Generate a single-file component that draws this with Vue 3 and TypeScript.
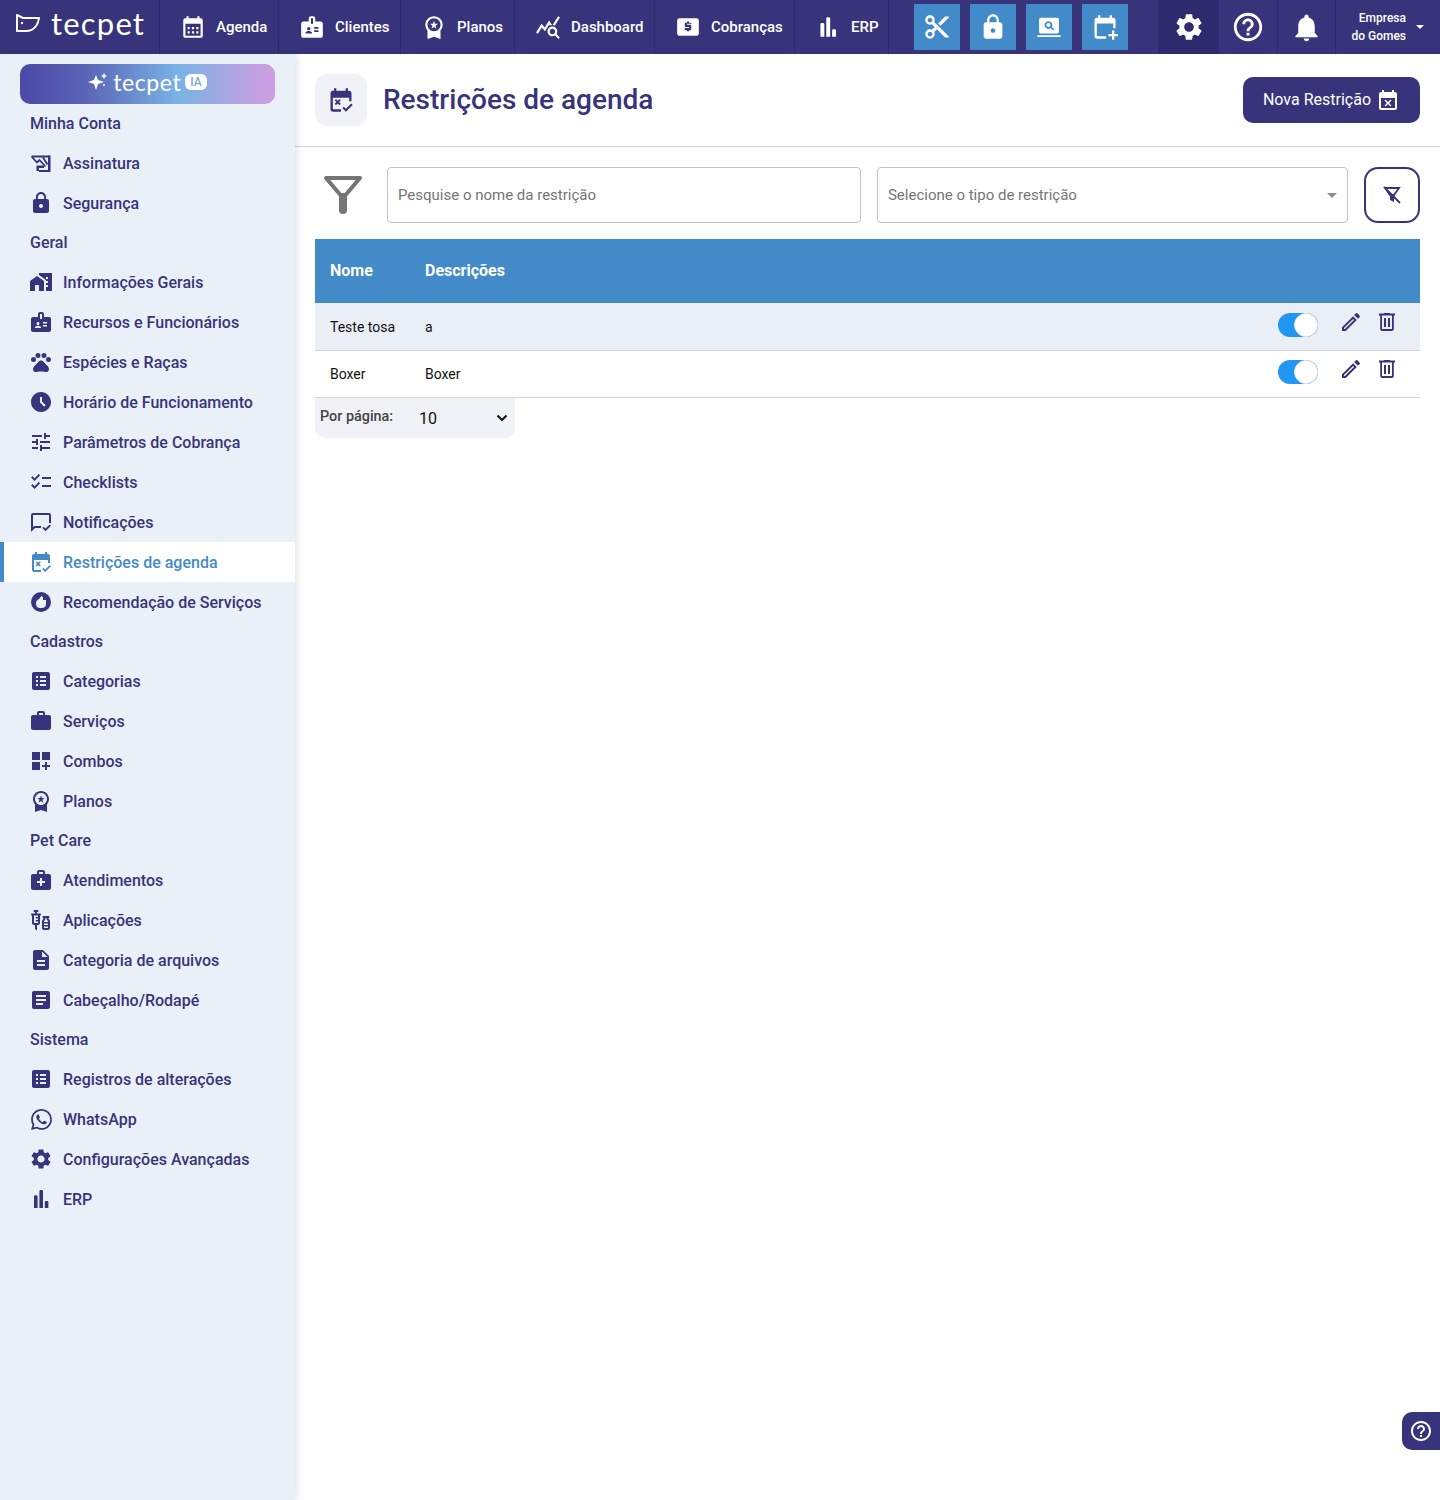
<template>
  <div class="page">
    <header class="topbar">
      <div class="logo">
        <svg class="logo-mark" viewBox="0 0 26 20">
          <path d="M2 2 L8 5 H24 C23 12 19 18 11 18 H2 Z" fill="none" stroke="currentColor" stroke-width="2" stroke-linejoin="round" />
          <circle cx="7" cy="10" r="1.2" fill="currentColor" />
        </svg>
        <span class="logo-text">tecpet</span>
      </div>
      <a v-for="item in topLinks" :key="item.label" class="top-link" :style="{ width: item.width + 'px' }">
        <span class="icon-box"><Icon :name="item.icon" :size="26" /></span>
        <span>{{ item.label }}</span>
      </a>
      <div class="quick">
        <button v-for="icon in quickActions" :key="icon" class="quick-btn">
          <Icon :name="icon" :size="28" />
        </button>
      </div>
      <div class="top-cell gear-cell"><Icon name="gear" :size="32" /></div>
      <div class="top-cell help-cell"><Icon name="help" :size="34" /></div>
      <div class="top-cell bell-cell"><Icon name="bell" :size="33" /></div>
      <div class="company">
        <span>Empresa<br />do Gomes</span>
        <i class="caret"></i>
      </div>
    </header>

    <div class="body">
      <aside class="sidebar">
        <button class="ia-btn">
          <svg class="spark" viewBox="0 0 22 20">
            <path d="M8 3 L10 8 L16 10 L10 12 L8 18 L6 12 L0 10 L6 8 Z" fill="currentColor" />
            <path d="M16 1 L17 3 L19 4 L17 5 L16 7 L15 5 L13 4 L15 3 Z" fill="currentColor" />
            <circle cx="16" cy="13" r="1" fill="currentColor" />
          </svg>
          <span class="ia-text">tecpet</span>
          <span class="ia-tag">IA</span>
        </button>
        <template v-for="group in menu" :key="group.title">
          <div class="group-title">{{ group.title }}</div>
          <a
            v-for="item in group.items"
            :key="item.label"
            class="side-item"
            :class="{ current: item.label === 'Restrições de agenda' }"
          >
            <span class="icon-box"><Icon :name="item.icon" :size="item.icon === 'whatsapp' ? 21 : 24" /></span>
            <span>{{ item.label }}</span>
          </a>
        </template>
      </aside>

      <main class="content">
        <div class="page-head">
          <div class="head-icon"><Icon name="restrict" :size="28" /></div>
          <h1>Restrições de agenda</h1>
          <button class="new-btn">
            Nova Restrição
            <Icon name="busy" :size="24" />
          </button>
        </div>

        <div class="filters">
          <svg class="funnel" viewBox="0 0 40 40">
            <path d="M3 3H37L20 23Z" fill="none" stroke="#757575" stroke-width="4" stroke-linejoin="round" />
            <path d="M20 22V35" stroke="#757575" stroke-width="8" stroke-linecap="round" />
          </svg>
          <input class="field search" type="text" placeholder="Pesquise o nome da restrição" />
          <div class="field select">
            <span>Selecione o tipo de restrição</span>
            <i class="select-caret"></i>
          </div>
          <button class="clear-btn"><Icon name="filterOff" :size="24" /></button>
        </div>

        <table class="grid">
          <thead>
            <tr>
              <th class="col-name">Nome</th>
              <th>Descrições</th>
              <th></th>
            </tr>
          </thead>
          <tbody>
            <tr v-for="row in rows" :key="row.name">
              <td class="col-name">{{ row.name }}</td>
              <td>{{ row.description }}</td>
              <td>
                <div class="actions">
                  <span class="toggle"><span class="knob"></span></span>
                  <Icon name="pencil" :size="24" />
                  <Icon name="trash" :size="24" />
                </div>
              </td>
            </tr>
          </tbody>
        </table>

        <div class="pager">
          <span class="pager-label">Por página:</span>
          <span class="pager-value">10</span>
          <svg class="chevron" viewBox="0 0 12 8">
            <path d="M1.5 1.5 6 6l4.5-4.5" fill="none" stroke="#111" stroke-width="2" />
          </svg>
        </div>
      </main>
    </div>

    <button class="help-fab"><Icon name="help" :size="24" /></button>
  </div>
</template>

<script setup lang="ts">
import { h } from 'vue'

interface Glyph {
  d?: string
  s?: string
}

const glyphs: Record<string, Glyph> = {
  calendar: { d: 'M19 4h-1V2h-2v2H8V2H6v2H5a2 2 0 00-2 2v14a2 2 0 002 2h14a2 2 0 002-2V6a2 2 0 00-2-2zM5 9h14v11H5zM7 12h2v2H7zM11 12h2v2h-2zM15 12h2v2h-2zM7 16h2v2H7zM11 16h2v2h-2zM15 16h2v2h-2z' },
  badge: { d: 'M20 7h-5V4c0-1.1-.9-2-2-2h-2c-1.1 0-2 .9-2 2v3H4c-1.1 0-2 .9-2 2v11c0 1.1.9 2 2 2h16c1.1 0 2-.9 2-2V9c0-1.1-.9-2-2-2zM9 12c.83 0 1.5.67 1.5 1.5S9.83 15 9 15s-1.5-.67-1.5-1.5S8.17 12 9 12zm3 6H6v-.75c0-1 2-1.5 3-1.5s3 .5 3 1.5V18zm1-9h-2V4h2v5zm5 7.5h-4V15h4v1.5zm0-3h-4V12h4v1.5z' },
  medal: { d: 'M9.68 13.69 12 11.93l2.31 1.76-.88-2.85L15.75 9h-2.84L12 6.19 11.09 9H8.25l2.31 1.84-.88 2.85zM20 10c0-4.42-3.58-8-8-8s-8 3.58-8 8c0 2.03.76 3.87 2 5.28V23l6-2 6 2v-7.72c1.24-1.41 2-3.25 2-5.28zm-8-6c3.31 0 6 2.69 6 6s-2.69 6-6 6-6-2.69-6-6 2.69-6 6-6z' },
  stats: { d: 'M19.88 18.47c.44-.7.7-1.51.7-2.39 0-2.49-2.01-4.5-4.5-4.5s-4.5 2.01-4.5 4.5 2.01 4.5 4.49 4.5c.88 0 1.7-.26 2.39-.7L21.58 23 23 21.58l-3.12-3.11zm-3.8.11c-1.38 0-2.5-1.12-2.5-2.5s1.12-2.5 2.5-2.5 2.5 1.12 2.5 2.5-1.12 2.5-2.5 2.5zm-.36-8.5c-.74.02-1.45.18-2.1.45l-.55-.83-3.8 6.18-3.01-3.52-3.63 5.81L1 17l5-8 3 3.5L13 6l2.72 4.08zm2.59.5c-.64-.28-1.33-.45-2.05-.49L21.38 2 23 3.18l-4.69 7.4z' },
  money: { d: 'M20 4H4c-1.11 0-1.99.89-1.99 2L2 18c0 1.11.89 2 2 2h16c1.11 0 2-.89 2-2V6c0-1.11-.89-2-2-2zm-5 5h-4v1h3c.55 0 1 .45 1 1v3c0 .55-.45 1-1 1h-1v1h-2v-1H9v-2h4v-1h-3c-.55 0-1-.45-1-1V9c0-.55.45-1 1-1h1V7h2v1h2v1z' },
  bars: { d: 'M5 9.5a1.2 1.2 0 011.2-1.2h1.2a1.2 1.2 0 011.2 1.2V21H5zM10.4 4.2A1.2 1.2 0 0111.6 3h1.2A1.2 1.2 0 0114 4.2V21h-3.6zM15.8 15.2a1.2 1.2 0 011.2-1.2h1.2a1.2 1.2 0 011.2 1.2V21h-3.6z' },
  scissors: { d: 'M9.64 7.64c.23-.5.36-1.05.36-1.64 0-2.21-1.79-4-4-4S2 3.79 2 6s1.79 4 4 4c.59 0 1.14-.13 1.64-.36L10 12l-2.36 2.36C7.14 14.13 6.59 14 6 14c-2.21 0-4 1.79-4 4s1.79 4 4 4 4-1.79 4-4c0-.59-.13-1.14-.36-1.64L12 14l7 7h3v-1L9.64 7.64zM6 8c-1.1 0-2-.89-2-2s.9-2 2-2 2 .89 2 2-.9 2-2 2zm0 12c-1.1 0-2-.89-2-2s.9-2 2-2 2 .89 2 2-.9 2-2 2zm6-7.5c-.28 0-.5-.22-.5-.5s.22-.5.5-.5.5.22.5.5-.22.5-.5.5zM19 3l-6 6 2 2 7-7V3z' },
  lock: { d: 'M18 8h-1V6c0-2.76-2.24-5-5-5S7 3.24 7 6v2H6c-1.1 0-2 .9-2 2v10c0 1.1.9 2 2 2h12c1.1 0 2-.9 2-2V10c0-1.1-.9-2-2-2zm-6 9c-1.1 0-2-.9-2-2s.9-2 2-2 2 .9 2 2-.9 2-2 2zm3.1-9H8.9V6c0-1.71 1.39-3.1 3.1-3.1 1.71 0 3.1 1.39 3.1 3.1v2z' },
  laptop: { d: 'M5 4h14a1.5 1.5 0 011.5 1.5V16a1.5 1.5 0 01-1.5 1.5H5A1.5 1.5 0 013.5 16V5.5A1.5 1.5 0 015 4zM2 19h20v1.6H2zM11.5 7a3.3 3.3 0 102 5.9l2 2 1-1-2-2A3.3 3.3 0 0011.5 7zM11.5 8.5a1.8 1.8 0 110 3.6 1.8 1.8 0 010-3.6z' },
  calendarAdd: { d: 'M19 4h-1V2h-2v2H8V2H6v2H5a2 2 0 00-2 2v14a2 2 0 002 2h8v-2H5V9h14v4h2V6a2 2 0 00-2-2zM18 15h2v3h3v2h-3v3h-2v-3h-3v-2h3z' },
  gear: { d: 'M19.14 12.94c.04-.3.06-.61.06-.94 0-.32-.02-.64-.07-.94l2.03-1.58c.18-.14.23-.41.12-.61l-1.92-3.32c-.12-.22-.37-.29-.59-.22l-2.39.96c-.5-.38-1.03-.7-1.62-.94l-.36-2.54c-.04-.24-.24-.41-.48-.41h-3.84c-.24 0-.43.17-.47.41l-.36 2.54c-.59.24-1.13.57-1.62.94l-2.39-.96c-.22-.08-.47 0-.59.22L2.74 8.87c-.12.21-.08.47.12.61l2.03 1.58c-.05.3-.09.63-.09.94s.02.64.07.94l-2.03 1.58c-.18.14-.23.41-.12.61l1.92 3.32c.12.22.37.29.59.22l2.39-.96c.5.38 1.03.7 1.62.94l.36 2.54c.05.24.24.41.48.41h3.84c.24 0 .44-.17.47-.41l.36-2.54c.59-.24 1.13-.56 1.62-.94l2.39.96c.22.08.47 0 .59-.22l1.92-3.32c.12-.22.07-.47-.12-.61l-2.01-1.58zM12 15.6c-1.98 0-3.6-1.62-3.6-3.6s1.62-3.6 3.6-3.6 3.6 1.62 3.6 3.6-1.62 3.6-3.6 3.6z' },
  help: { d: 'M11 18h2v-2h-2v2zm1-16C6.48 2 2 6.48 2 12s4.48 10 10 10 10-4.48 10-10S17.52 2 12 2zm0 18c-4.41 0-8-3.59-8-8s3.59-8 8-8 8 3.59 8 8-3.59 8-8 8zm0-14c-2.21 0-4 1.79-4 4h2c0-1.1.9-2 2-2s2 .9 2 2c0 2-3 1.75-3 5h2c0-2.25 3-2.5 3-5 0-2.21-1.79-4-4-4z' },
  bell: { d: 'M12 22c1.1 0 2-.9 2-2h-4c0 1.1.89 2 2 2zm6-6v-5c0-3.07-1.64-5.64-4.5-6.32V4c0-.83-.67-1.5-1.5-1.5s-1.5.67-1.5 1.5v.68C7.63 5.36 6 7.92 6 11v5l-2 2v1h16v-1l-2-2z' },
  restrict: { d: 'M19 4h-1V2h-2v2H8V2H6v2H5C3.9 4 3 4.9 3 6v14c0 1.1.9 2 2 2h7v-2H5V10h14v3h2V6c0-1.1-.9-2-2-2zM6.6 12.3l1.1-1.1 1.5 1.5 1.5-1.5 1.1 1.1-1.5 1.5 1.5 1.5-1.1 1.1-1.5-1.5-1.5 1.5-1.1-1.1 1.5-1.5zM16.2 22l-3-3 1.2-1.2 1.8 1.8 4.6-4.6 1.2 1.2z' },
  busy: { d: 'M19 4h-1V2h-2v2H8V2H6v2H5C3.9 4 3 4.9 3 6v14c0 1.1.9 2 2 2h14c1.1 0 2-.9 2-2V6c0-1.1-.9-2-2-2zm0 16H5V10h14v10zM9.5 18.5 12 16l2.5 2.5 1-1L13 15l2.5-2.5-1-1L12 14 9.5 11.5l-1 1L11 15l-2.5 2.5z' },
  sign: { d: 'M7.5 14.5H15V17H10v3H7.5ZM19 4.5h2.5V21H10v-2h9z', s: 'M2.5 5.5H20.5M2.5 5.5 8 11.5l2.5-2.5 6 6.5M14 6.5l4.5 7' },
  home: { d: 'M1 11v10h5v-6h4v6h5V11L8 6zM10 3v1.97l7 5V11h2v2h-2v2h2v2h-2v4h6V3H10zm9 6h-2V7h2v2z' },
  pets: { d: 'M4.5 9.5m-2.5 0a2.5 2.5 0 1 0 5 0a2.5 2.5 0 1 0 -5 0M9 5.5m-2.5 0a2.5 2.5 0 1 0 5 0a2.5 2.5 0 1 0 -5 0M15 5.5m-2.5 0a2.5 2.5 0 1 0 5 0a2.5 2.5 0 1 0 -5 0M19.5 9.5m-2.5 0a2.5 2.5 0 1 0 5 0a2.5 2.5 0 1 0 -5 0M17.34 14.86c-.87-1.02-1.6-1.89-2.48-2.91-.46-.54-1.05-1.08-1.75-1.32-.11-.04-.22-.07-.33-.09-.25-.04-.52-.04-.78-.04s-.53 0-.79.05c-.11.02-.22.05-.33.09-.7.24-1.28.78-1.75 1.32-.87 1.02-1.6 1.89-2.48 2.91-1.31 1.31-2.92 2.76-2.62 4.79.29 1.02 1.02 2.03 2.33 2.32.73.15 3.06-.44 5.54-.44h.18c2.48 0 4.81.58 5.54.44 1.31-.29 2.04-1.31 2.33-2.32.31-2.04-1.3-3.49-2.61-4.8z' },
  clock: { d: 'M11.99 2C6.47 2 2 6.48 2 12s4.47 10 9.99 10C17.52 22 22 17.52 22 12S17.52 2 11.99 2zm3.3 14.71L11 12.41V7h2v4.59l3.71 3.71-1.42 1.41z' },
  tune: { d: 'M3 17v2h6v-2H3zM3 5v2h10V5H3zm10 16v-2h8v-2h-8v-2h-2v6h2zM7 9v2H3v2h4v2h2V9H7zm14 4v-2H11v2h10zm-6-4h2V7h4V5h-4V3h-2v6z' },
  checklist: { d: 'M22 7h-9v2h9V7zm0 8h-9v2h9v-2zM5.54 11 2 7.46l1.41-1.41 2.12 2.12 4.24-4.24 1.41 1.41L5.54 11zm0 8L2 15.46l1.41-1.41 2.12 2.12 4.24-4.24 1.41 1.41L5.54 19z' },
  chat: { d: 'M4 3h16a2 2 0 012 2v8h-2V5H4v12.2L5.2 16H12v2H6l-4 4V5a2 2 0 012-2zM16.5 21.2l-3.2-3.2 1.3-1.3 1.9 1.9 4.2-4.2 1.3 1.3z' },
  thumb: { d: 'M12 2a10 10 0 100 20 10 10 0 000-20zM12.5 6 14 7.2V10h3v4c0 2.4-1.7 4-4 4h-2c-2.4 0-4-1.7-4-4.6C7 10.5 9 10 10 9z' },
  list: { d: 'M19 3H5c-1.1 0-2 .9-2 2v14c0 1.1.9 2 2 2h14c1.1 0 2-.9 2-2V5c0-1.1-.9-2-2-2zM9 17H7v-2h2v2zm0-4H7v-2h2v2zm0-4H7V7h2v2zm8 8h-6v-2h6v2zm0-4h-6v-2h6v2zm0-4h-6V7h6v2z' },
  work: { d: 'M20 6h-4V4c0-1.11-.89-2-2-2h-4c-1.11 0-2 .89-2 2v2H4c-1.11 0-1.99.89-1.99 2L2 19c0 1.11.89 2 2 2h16c1.11 0 2-.89 2-2V8c0-1.11-.89-2-2-2zm-6 0h-4V4h4v2z' },
  combos: { d: 'M3 3h8v8H3zm10 0h8v8h-8zM3 13h8v8H3zm15 0h-2v3h-3v2h3v3h2v-3h3v-2h-3z' },
  medical: { d: 'M20 6h-4V4c0-1.1-.9-2-2-2h-4c-1.1 0-2 .9-2 2v2H4c-1.1 0-2 .9-2 2v12c0 1.1.9 2 2 2h16c1.1 0 2-.9 2-2V8c0-1.1-.9-2-2-2zM10 4h4v2h-4V4zm6 11h-3v3h-2v-3H8v-2h3v-3h2v3h3v2z' },
  vaccine: { d: 'M11 5.5H8V4h.5c.55 0 1-.45 1-1s-.45-1-1-1h-3c-.55 0-1 .45-1 1s.45 1 1 1H6v1.5H3c-.55 0-1 .45-1 1s.45 1 1 1V15c0 1.1.9 2 2 2h1v4l2 1.5V17h1c1.1 0 2-.9 2-2V7.5c.55 0 1-.45 1-1S11.55 5.5 11 5.5zM9 9H7.25c-.41 0-.75.34-.75.75s.34.75.75.75H9V12H7.25c-.41 0-.75.34-.75.75s.34.75.75.75H9V15H5V7.5h4V9zM19.5 10.5V10c.55 0 1-.45 1-1s-.45-1-1-1h-5c-.55 0-1 .45-1 1s.45 1 1 1v.5c0 .5-1.5 1.16-1.5 3V20c0 1.1.9 2 2 2h4c1.1 0 2-.9 2-2v-6.5C21 11.66 19.5 11 19.5 10.5zM16.5 10.5V10h1v.5c0 1.6 1.5 2 1.5 3V14h-4v-.5C15 12.5 16.5 12.1 16.5 10.5zM19 15.5V17h-4v-1.5H19zM15 20v-1.5h4V20H15z' },
  file: { d: 'M14 2H6c-1.1 0-1.99.9-1.99 2L4 20c0 1.1.89 2 1.99 2H18c1.1 0 2-.9 2-2V8l-6-6zm2 16H8v-2h8v2zm0-4H8v-2h8v2zm-3-5V3.5L18.5 9H13z' },
  article: { d: 'M19 3H5c-1.1 0-2 .9-2 2v14c0 1.1.9 2 2 2h14c1.1 0 2-.9 2-2V5c0-1.1-.9-2-2-2zm-5 14H7v-2h7v2zm3-4H7v-2h10v2zm0-4H7V7h10v2z' },
  whatsapp: { d: 'M17.472 14.382c-.297-.149-1.758-.867-2.03-.967-.273-.099-.471-.148-.67.15-.197.297-.767.966-.94 1.164-.173.199-.347.223-.644.075-.297-.15-1.255-.463-2.39-1.475-.883-.788-1.48-1.761-1.653-2.059-.173-.297-.018-.458.13-.606.134-.133.298-.347.446-.52.149-.174.198-.298.298-.497.099-.198.05-.371-.025-.52-.075-.149-.669-1.612-.916-2.207-.242-.579-.487-.5-.669-.51-.173-.008-.371-.01-.57-.01-.198 0-.52.074-.792.372-.272.297-1.04 1.016-1.04 2.479 0 1.462 1.065 2.875 1.213 3.074.149.198 2.096 3.2 5.077 4.487.709.306 1.262.489 1.694.625.712.227 1.36.195 1.871.118.571-.085 1.758-.719 2.006-1.413.248-.694.248-1.289.173-1.413-.074-.124-.272-.198-.57-.347m-5.421 7.403h-.004a9.87 9.87 0 01-5.031-1.378l-.361-.214-3.741.982.998-3.648-.235-.374a9.86 9.86 0 01-1.51-5.26c.001-5.45 4.436-9.884 9.888-9.884 2.64 0 5.122 1.03 6.988 2.898a9.825 9.825 0 012.893 6.994c-.003 5.45-4.437 9.884-9.885 9.884m8.413-18.297A11.815 11.815 0 0012.05 0C5.495 0 .16 5.335.157 11.892c0 2.096.547 4.142 1.588 5.945L.057 24l6.305-1.654a11.882 11.882 0 005.683 1.448h.005c6.554 0 11.89-5.335 11.893-11.893a11.821 11.821 0 00-3.48-8.413z' },
  pencil: { d: 'M3 17.25V21h3.75L17.81 9.94l-3.75-3.75L3 17.25zM5.92 19H5v-.92l9.06-9.06.92.92L5.92 19zM20.71 5.63l-2.34-2.34a1 1 0 00-1.41 0l-1.83 1.83 3.75 3.75 1.83-1.83a1 1 0 000-1.41z' },
  trash: { d: 'M15 3.5V3H9v.5H4v2h1.2V19c0 1.1.9 2 2 2h9.6c1.1 0 2-.9 2-2V5.5H20v-2h-5zM17 19H7V5.5h10V19zM9 8h2v9H9zm4 0h2v9h-2z' },
  filterOff: { d: 'M10 12h4v7l-4-2z', s: 'M5 5h14l-5 7h-4zM4 4l16 16' },
}

const Icon = (props: { name: string; size?: number }) => {
  const glyph = glyphs[props.name]
  const children = []
  if (glyph.d) children.push(h('path', { d: glyph.d, fill: 'currentColor', 'fill-rule': 'evenodd' }))
  if (glyph.s) children.push(h('path', { d: glyph.s, fill: 'none', stroke: 'currentColor', 'stroke-width': 1.8 }))
  const size = props.size ?? 22
  return h('svg', { viewBox: '0 0 24 24', width: size, height: size, style: 'flex:none;display:block' }, children)
}
Icon.props = ['name', 'size']

const topLinks = [
  { label: 'Agenda', icon: 'calendar', width: 119 },
  { label: 'Clientes', icon: 'badge', width: 122 },
  { label: 'Planos', icon: 'medal', width: 114 },
  { label: 'Dashboard', icon: 'stats', width: 140 },
  { label: 'Cobranças', icon: 'money', width: 140 },
  { label: 'ERP', icon: 'bars', width: 94 },
]

const quickActions = ['scissors', 'lock', 'laptop', 'calendarAdd']

const menu = [
  {
    title: 'Minha Conta',
    items: [
      { label: 'Assinatura', icon: 'sign' },
      { label: 'Segurança', icon: 'lock' },
    ],
  },
  {
    title: 'Geral',
    items: [
      { label: 'Informações Gerais', icon: 'home' },
      { label: 'Recursos e Funcionários', icon: 'badge' },
      { label: 'Espécies e Raças', icon: 'pets' },
      { label: 'Horário de Funcionamento', icon: 'clock' },
      { label: 'Parâmetros de Cobrança', icon: 'tune' },
      { label: 'Checklists', icon: 'checklist' },
      { label: 'Notificações', icon: 'chat' },
      { label: 'Restrições de agenda', icon: 'restrict' },
      { label: 'Recomendação de Serviços', icon: 'thumb' },
    ],
  },
  {
    title: 'Cadastros',
    items: [
      { label: 'Categorias', icon: 'list' },
      { label: 'Serviços', icon: 'work' },
      { label: 'Combos', icon: 'combos' },
      { label: 'Planos', icon: 'medal' },
    ],
  },
  {
    title: 'Pet Care',
    items: [
      { label: 'Atendimentos', icon: 'medical' },
      { label: 'Aplicações', icon: 'vaccine' },
      { label: 'Categoria de arquivos', icon: 'file' },
      { label: 'Cabeçalho/Rodapé', icon: 'article' },
    ],
  },
  {
    title: 'Sistema',
    items: [
      { label: 'Registros de alterações', icon: 'list' },
      { label: 'WhatsApp', icon: 'whatsapp' },
      { label: 'Configurações Avançadas', icon: 'gear' },
      { label: 'ERP', icon: 'bars' },
    ],
  },
]

const rows = [
  { name: 'Teste tosa', description: 'a' },
  { name: 'Boxer', description: 'Boxer' },
]
</script>

<style>
body {
  margin: 0;
  background: #fff;
}
</style>

<style scoped>
.page {
  height: 1500px;
  display: flex;
  flex-direction: column;
  overflow: hidden;
  font-family: Roboto, "Liberation Sans", sans-serif;
  color: #38347b;
}
button {
  font-family: inherit;
  border: none;
  cursor: pointer;
}
.icon-box {
  width: 22px;
  height: 22px;
  flex: none;
  display: flex;
  align-items: center;
  justify-content: center;
}

.topbar {
  height: 54px;
  flex: none;
  display: flex;
  align-items: stretch;
  background: #38347b;
  color: #fff;
}
.logo {
  width: 160px;
  flex: none;
  box-sizing: border-box;
  padding: 0 0 8px 15px;
  display: flex;
  align-items: center;
  gap: 10px;
  border-right: 1px solid #2e2a6e;
}
.logo-mark {
  width: 26px;
  height: 20px;
}
.logo-text {
  font-family: Lato, sans-serif;
  font-size: 31px;
  letter-spacing: 1.2px;
}
.top-link {
  flex: none;
  box-sizing: border-box;
  display: flex;
  align-items: center;
  gap: 12px;
  padding-left: 22px;
  font-size: 15px;
  font-weight: 500;
  border-right: 1px solid #2e2a6e;
}
.quick {
  width: 269px;
  flex: none;
  box-sizing: border-box;
  display: flex;
  align-items: center;
  gap: 10px;
  padding-left: 25px;
}
.quick-btn {
  width: 46px;
  height: 46px;
  padding: 0;
  display: flex;
  align-items: center;
  justify-content: center;
  background: #438bc8;
  color: #fff;
}
.top-cell {
  flex: none;
  display: flex;
  align-items: center;
  justify-content: center;
  border-left: 1px solid #2e2a6e;
}
.gear-cell {
  width: 59px;
  background: #2e2a6e;
}
.help-cell {
  width: 58px;
}
.bell-cell {
  width: 57px;
}
.company {
  flex: 1;
  display: flex;
  align-items: center;
  justify-content: flex-end;
  gap: 10px;
  padding-right: 16px;
  border-left: 1px solid #2e2a6e;
  font-size: 12px;
  font-weight: 500;
  line-height: 18px;
  text-align: right;
}
.caret {
  width: 0;
  height: 0;
  border-left: 4px solid transparent;
  border-right: 4px solid transparent;
  border-top: 4px solid #fff;
}

.body {
  flex: 1;
  display: flex;
  min-height: 0;
}
.sidebar {
  width: 295px;
  flex: none;
  box-sizing: border-box;
  padding-top: 10px;
  background: #eaf0f8;
  box-shadow: 2px 0 8px rgba(0, 0, 0, 0.12);
  position: relative;
}
.ia-btn {
  display: flex;
  align-items: center;
  justify-content: center;
  width: 255px;
  height: 40px;
  margin-left: 20px;
  padding: 0 0 4px 0;
  border-radius: 10px;
  color: #fff;
  background: linear-gradient(90deg, #4c49a8 0%, #5a63b5 25%, #79b3e6 62%, #a5a8e2 80%, #cf9ce0 100%);
}
.spark {
  width: 22px;
  height: 20px;
  margin-right: 3px;
}
.ia-text {
  font-family: Lato, sans-serif;
  font-size: 23px;
  letter-spacing: 0.6px;
}
.ia-tag {
  margin-left: 4px;
  padding: 0 5px;
  height: 16px;
  border-radius: 6px;
  background: #fff;
  color: #7da6de;
  font-size: 12px;
  font-weight: 500;
  line-height: 16px;
}
.group-title {
  height: 39px;
  padding-left: 30px;
  font-size: 16px;
  font-weight: 500;
  line-height: 39px;
}
.side-item {
  height: 40px;
  display: flex;
  align-items: center;
  gap: 11px;
  padding-left: 30px;
  font-size: 16px;
  font-weight: 500;
}
.side-item.current {
  background: #fff;
  color: #438bc8;
  box-shadow: inset 4px 0 0 #438bc8;
}

.content {
  flex: 1;
  min-width: 0;
}
.page-head {
  height: 93px;
  box-sizing: border-box;
  display: flex;
  align-items: center;
  padding: 0 20px 1px;
  border-bottom: 1px solid #d4d4d8;
}
.head-icon {
  width: 52px;
  height: 52px;
  display: flex;
  align-items: center;
  justify-content: center;
  border-radius: 12px;
  background: #f1f2f7;
}
h1 {
  flex: 1;
  margin: 0 0 0 16px;
  font-size: 28px;
  font-weight: 500;
}
.new-btn {
  height: 46px;
  display: flex;
  align-items: center;
  gap: 5px;
  padding: 0 20px;
  border-radius: 10px;
  background: #38347b;
  color: #fff;
  font-size: 16px;
  font-weight: 400;
}

.filters {
  display: flex;
  align-items: center;
  gap: 16px;
  margin: 20px 20px 16px;
}
.funnel {
  width: 40px;
  height: 40px;
  margin: 0 0 0 8px;
  flex: none;
}
.field {
  min-width: 0;
  height: 56px;
  box-sizing: border-box;
  padding: 0 10px;
  border: 1px solid #c4c4c4;
  border-radius: 4px;
  font-family: inherit;
  font-size: 15px;
  color: #757575;
  background: #fff;
  outline: none;
}
.field::placeholder {
  color: #757575;
  opacity: 1;
}
.search {
  flex: 474 1 0;
  margin-left: 8px;
}
.select {
  flex: 471 1 0;
  display: flex;
  align-items: center;
  justify-content: space-between;
}
.select-caret {
  width: 0;
  height: 0;
  border-left: 5px solid transparent;
  border-right: 5px solid transparent;
  border-top: 5px solid #8c8c8c;
}
.clear-btn {
  width: 56px;
  height: 56px;
  flex: none;
  display: flex;
  align-items: center;
  justify-content: center;
  padding: 0;
  box-sizing: border-box;
  border: 2px solid #38347b;
  border-radius: 14px;
  background: #fff;
  color: #38347b;
}

.grid {
  width: calc(100% - 40px);
  margin: 0 20px;
  border-collapse: collapse;
  table-layout: fixed;
  color: #111;
  font-size: 14px;
}
.grid th {
  height: 62px;
  padding: 0 0 2px;
  background: #438bc8;
  color: #fff;
  font-size: 16px;
  font-weight: 700;
  text-align: left;
}
.grid td {
  height: 47px;
  padding: 0;
  border-bottom: 1px solid #d4d4d8;
}
.grid tbody tr:last-child td {
  height: 46px;
}
.grid tbody tr:first-child td {
  background: #eaeff6;
}
.grid th:last-child,
.grid td:last-child {
  width: 200px;
}
.col-name {
  width: 95px;
  padding-left: 15px !important;
}
.actions {
  display: flex;
  align-items: center;
  justify-content: flex-end;
  gap: 12px;
  padding-right: 21px;
  color: #38347b;
}
.actions svg {
  margin-bottom: 10px;
}
.toggle {
  width: 40px;
  height: 24px;
  margin-right: 9px;
  margin-bottom: 4px;
  border-radius: 12px;
  background: #2196f3;
  display: flex;
  justify-content: flex-end;
}
.knob {
  width: 24px;
  height: 24px;
  box-sizing: border-box;
  border-radius: 50%;
  background: #fff;
  border: 1px solid #e4e8ee;
}

.pager {
  width: 200px;
  height: 40px;
  margin-left: 20px;
  box-sizing: border-box;
  display: flex;
  align-items: center;
  padding: 0 7px 0 5px;
  background: #f1f2f7;
  border-radius: 0 0 10px 10px;
}
.pager-label {
  width: 99px;
  color: #444;
  font-size: 14.4px;
  font-weight: 500;
  margin-bottom: 4px;
}
.pager-value {
  flex: 1;
  color: #111;
  font-size: 16px;
}
.chevron {
  width: 12px;
  height: 8px;
}

.help-fab {
  position: fixed;
  right: 0;
  bottom: 50px;
  width: 38px;
  height: 38px;
  padding: 0;
  display: flex;
  align-items: center;
  justify-content: center;
  border-radius: 10px 0 0 10px;
  background: #38347b;
  color: #fff;
}
</style>
